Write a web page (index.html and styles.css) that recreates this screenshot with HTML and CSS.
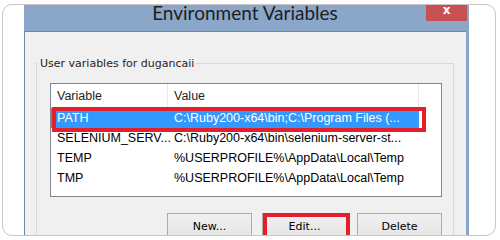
FILE: index.html
```html
<!DOCTYPE html>
<html lang="en">
<head>
    <meta charset="UTF-8">
    <title>Environment Variables</title>
    <link rel="stylesheet" href="styles.css">
</head>
<body>

    <div class="frame">
        <div class="dialog">
            <div class="titleBar">
                <span></span>
                <span class="title">Environment Variables</span>
                <span class="close">x</span>
            </div>
            <div class="client">
                <fieldset class="group">
                    <legend>User variables for dugancaii</legend>
                    <div class="list">
                        <div class="row head">
                            <span class="c1">Variable</span>
                            <span class="c2">Value</span>
                        </div>
                        <div class="row sel">
                            <span class="c1">PATH</span>
                            <span class="c2">C:\Ruby200-x64\bin;C:\Program Files (...</span>
                        </div>
                        <div class="row">
                            <span class="c1">SELENIUM_SERV...</span>
                            <span class="c2">C:\Ruby200-x64\bin\selenium-server-st...</span>
                        </div>
                        <div class="row">
                            <span class="c1">TEMP</span>
                            <span class="c2">%USERPROFILE%\AppData\Local\Temp</span>
                        </div>
                        <div class="row">
                            <span class="c1">TMP</span>
                            <span class="c2">%USERPROFILE%\AppData\Local\Temp</span>
                        </div>
                        <span class="mark pathMark"></span>
                    </div>
                    <div class="buttons">
                        <button class="btn">New...</button>
                        <button class="btn">Edit...</button>
                        <button class="btn">Delete</button>
                        <span class="mark editMark"></span>
                    </div>
                </fieldset>
            </div>
        </div>
    </div>

</body>
</html>
```

FILE: styles.css
```css
html, body {
    margin: 0;
    background: #fff;
}
.frame {
    margin: 4px 0 0 2px;
    width: 494px;
    height: 232px;
    box-sizing: border-box;
    border: 1px solid #cdc3c3;
    border-radius: 10px;
    background: #fff;
}
.dialog {
    margin-left: 21px;
    width: 445px;
    height: 230px;
    padding-right: 3px;
    box-sizing: border-box;
    background: #8aa6c9;
}
.titleBar {
    height: 26px;
    display: grid;
    grid-template-columns: 1fr auto 1fr;
}
.titleBar .title {
    font-family: Lato, "Liberation Sans", sans-serif;
    font-size: 19px;
    line-height: 16px;
    color: #1e1e1e;
}
.titleBar .close {
    justify-self: end;
    width: 41px;
    height: 16px;
    margin-right: -1px;
    background: #c75050;
    color: #fff;
    font-family: "DejaVu Sans", sans-serif;
    font-weight: bold;
    font-size: 12px;
    line-height: 10px;
    text-align: center;
}
.client {
    height: 204px;
    box-sizing: border-box;
    overflow: hidden;
    background: #f0f0f0;
    border-top: 1px solid #6e89ad;
    border-left: 1px solid #6e89ad;
    font-family: "DejaVu Sans", Tahoma, sans-serif;
    font-size: 11px;
    color: #000;
}
.group {
    margin: 24px 12px 0 11px;
    padding: 0;
    border: 1px solid #d9d9d9;
    min-inline-size: 0;
    height: 200px;
}
.group legend {
    margin-left: 1px;
    padding: 0 2px;
    line-height: 15px;
    color: #1e1e1e;
}
.list {
    position: relative;
    margin: 12px 0 0 13px;
    width: 392px;
    height: 114px;
    box-sizing: border-box;
    border: 1px solid #828790;
    background: #fff;
    font-family: "Liberation Sans", Tahoma, sans-serif;
    font-size: 12.5px;
}
.row {
    display: flex;
    height: 20px;
    line-height: 20px;
    white-space: nowrap;
}
.row .c1 {
    flex: none;
    width: 117px;
    padding-left: 6px;
    box-sizing: border-box;
}
.row .c2 {
    flex: none;
    width: 251px;
    padding-left: 6px;
    box-sizing: border-box;
    overflow: hidden;
}
.row.head {
    height: 24px;
    line-height: 25px;
    color: #1e1e1e;
}
.row.head span {
    border-right: 1px solid #e8e8e8;
}
.row.sel span {
    background: #3399ff;
    color: #fff;
}
.buttons {
    position: relative;
    display: flex;
    gap: 10px;
    margin: 16px 0 0 130px;
}
.btn {
    width: 85px;
    height: 26px;
    padding: 0;
    border: 1px solid #acacac;
    background: linear-gradient(#f0f0f0, #e5e5e5);
    font-family: "DejaVu Sans", Tahoma, sans-serif;
    font-size: 11px;
    color: #000;
}
.mark {
    position: absolute;
    box-sizing: border-box;
    border: 4px solid #e2202c;
}
.pathMark {
    left: 1px;
    top: 23px;
    width: 374px;
    height: 25px;
}
.editMark {
    left: 96px;
    top: 0;
    width: 87px;
    height: 30px;
}
```
